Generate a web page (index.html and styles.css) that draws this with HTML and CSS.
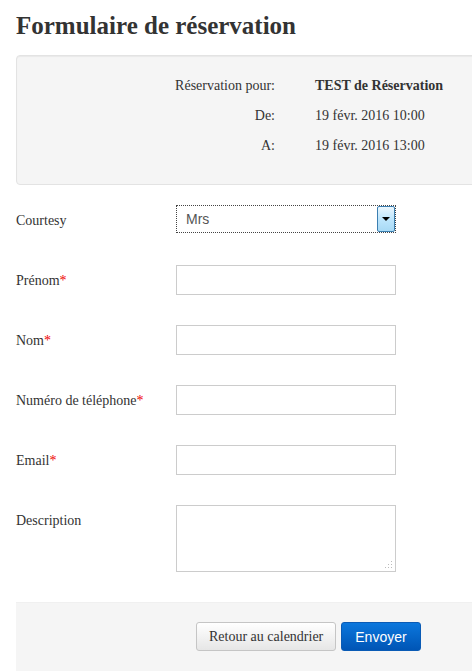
FILE: index.html
```html
<!DOCTYPE html>
<html lang="fr">
<head>
    <meta charset="UTF-8">
    <meta name="viewport" content="width=device-width, initial-scale=1.0">
    <title>Formulaire de réservation</title>
    <link rel="stylesheet" href="styles.css">
</head>
<body>
    <div class="page">
        <h1>Formulaire de réservation</h1>

        <div class="well">
            <div class="summary">
                <span class="summary-label">Réservation pour:</span>
                <strong class="summary-value">TEST de Réservation</strong>
                <span class="summary-label">De:</span>
                <span class="summary-value">19 févr. 2016 10:00</span>
                <span class="summary-label">A:</span>
                <span class="summary-value">19 févr. 2016 13:00</span>
            </div>
        </div>

        <form class="form">
            <div class="row">
                <label for="courtesy">Courtesy</label>
                <div class="select-wrap">
                    <select id="courtesy">
                        <option>Mrs</option>
                        <option>Mr</option>
                        <option>Ms</option>
                    </select>
                    <span class="select-arrow"></span>
                </div>
            </div>
            <div class="row">
                <label for="firstname">Prénom<span class="req">*</span></label>
                <input type="text" id="firstname">
            </div>
            <div class="row">
                <label for="lastname">Nom<span class="req">*</span></label>
                <input type="text" id="lastname">
            </div>
            <div class="row">
                <label for="phone">Numéro de téléphone<span class="req">*</span></label>
                <input type="text" id="phone">
            </div>
            <div class="row">
                <label for="email">Email<span class="req">*</span></label>
                <input type="text" id="email">
            </div>
            <div class="row">
                <label for="description">Description</label>
                <div class="textarea-wrap">
                    <textarea id="description"></textarea>
                    <span class="grip"></span>
                </div>
            </div>

            <div class="actions">
                <button type="button" class="btn">Retour au calendrier</button>
                <button type="submit" class="btn btn-primary">Envoyer</button>
            </div>
        </form>
    </div>
</body>
</html>
```

FILE: styles.css
```css
html, body {
    overflow: hidden;
}

body {
    margin: 0;
    font-family: 'Liberation Serif', 'Times New Roman', serif;
    font-size: 14px;
    line-height: 20px;
    color: #333;
    background: #fff;
}

.page {
    width: 560px;
    padding: 11px 0 0 16px;
}

h1 {
    margin: 0 0 15px;
    font-size: 25px;
    line-height: 29px;
    font-weight: bold;
    color: #333;
}

.well {
    height: 92px;
    padding: 15px 19px 21px;
    margin-bottom: 20px;
    background-color: #f5f5f5;
    border: 1px solid #e3e3e3;
    border-radius: 4px;
    box-shadow: inset 0 1px 1px rgba(0, 0, 0, 0.05);
}

.summary {
    display: grid;
    grid-template-columns: 239px 1fr;
    column-gap: 40px;
    line-height: 30px;
}

.summary-label {
    text-align: right;
}

.row {
    display: grid;
    grid-template-columns: 160px 220px;
    align-items: start;
    margin-bottom: 30px;
}

.row label {
    padding-top: 2px;
    line-height: 28px;
}

.req {
    color: #e00;
}

.row input,
.row textarea {
    box-sizing: border-box;
    display: block;
    width: 220px;
    height: 30px;
    margin: 0;
    padding: 4px 6px;
    border: 1px solid #ccc;
    border-radius: 0;
    background: #fff;
    font-family: 'Liberation Sans', Arial, sans-serif;
    font-size: 14px;
}

.textarea-wrap {
    position: relative;
    height: 67px;
}

.row textarea {
    height: 67px;
    resize: none;
}

.grip {
    position: absolute;
    right: 4px;
    bottom: 4px;
    width: 8px;
    height: 8px;
    background:
        radial-gradient(circle, #bbb 0.8px, transparent 1px) 0 0 / 3px 3px;
    clip-path: polygon(100% 0, 100% 100%, 0 100%);
}

.select-wrap {
    position: relative;
    width: 220px;
    height: 30px;
}

.select-wrap select {
    appearance: none;
    -webkit-appearance: none;
    box-sizing: border-box;
    display: block;
    width: 220px;
    height: 28px;
    margin: 0;
    padding: 0 0 0 9px;
    border: 1px dotted #444;
    border-radius: 0;
    background: #fff;
    font-family: 'Liberation Sans', Arial, sans-serif;
    font-size: 14px;
    color: #555;
}

.select-arrow {
    position: absolute;
    top: 1px;
    right: 1px;
    width: 16px;
    height: 24px;
    border: 1px solid #3c7fb1;
    border-radius: 2px;
    background: linear-gradient(#eaf6fd, #bee6fd 50%, #a7d9f5);
    pointer-events: none;
}

.select-arrow::after {
    content: "";
    position: absolute;
    top: 10px;
    left: 4px;
    border-left: 4px solid transparent;
    border-right: 4px solid transparent;
    border-top: 4px solid #000;
}

.actions {
    display: flex;
    gap: 5px;
    padding: 19px 20px 20px 180px;
    background-color: #f5f5f5;
    border-top: 1px solid #f0f0f0;
    height: 60px;
}

.btn {
    box-sizing: border-box;
    height: 29px;
    padding: 0 12px;
    border: 1px solid #c5c5c5;
    border-radius: 3px;
    background: linear-gradient(#fff, #e6e6e6);
    font-family: 'Liberation Serif', 'Times New Roman', serif;
    font-size: 14px;
    color: #333;
    cursor: pointer;
}

.btn-primary {
    padding: 0 13px;
    border-color: #0a5bb5;
    background: linear-gradient(#0b77dd, #0055b5);
    font-family: 'Liberation Sans', Arial, sans-serif;
    font-size: 14px;
    color: #fff;
}
```
